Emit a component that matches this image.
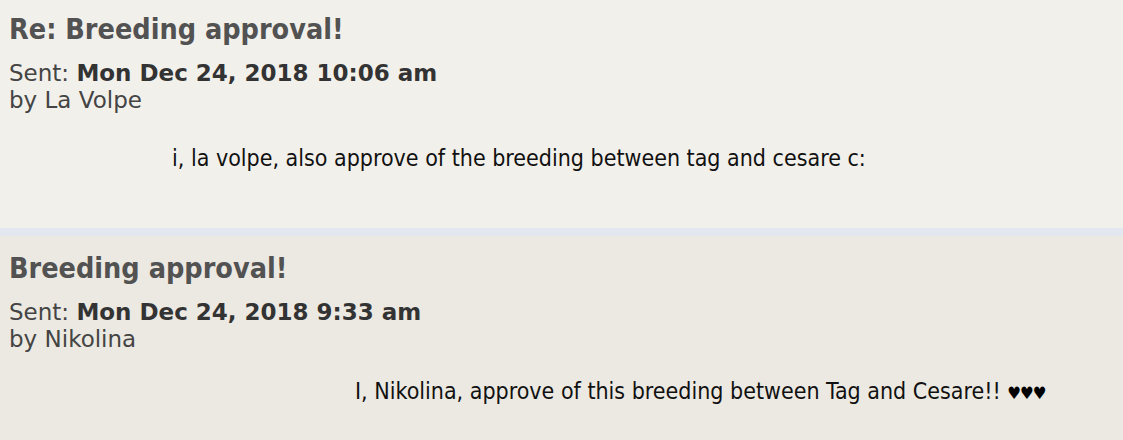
import React from 'react';

const posts = [
  {
    title: 'Re: Breeding approval!',
    sent: 'Mon Dec 24, 2018 10:06 am',
    by: 'La Volpe',
    body: 'i, la volpe, also approve of the breeding between tag and cesare c:',
    hearts: '',
    bg: 'bg-[#f2f0eb]',
    box: 'pt-[12px] h-[228px]',
    bodyCls: 'pl-[163px] mt-[30px]',
  },
  {
    title: 'Breeding approval!',
    sent: 'Mon Dec 24, 2018 9:33 am',
    by: 'Nikolina',
    body: 'I, Nikolina, approve of this breeding between Tag and Cesare!! ',
    hearts: '♥♥♥',
    bg: 'bg-[#ece9e2]',
    box: 'pt-[15px] h-[204px]',
    bodyCls: 'pl-[346px] mt-[24px]',
  },
];

function Post({ post }) {
  return (
    <div className={`${post.bg} ${post.box} px-[9px] font-['DejaVu_Sans',sans-serif]`}>
      <h2 className="text-[28.5px] leading-[36px] font-bold text-[#525252] font-['DejaVu_Sans_Condensed','DejaVu_Sans',sans-serif] font-stretch-condensed">
        {post.title}
      </h2>
      <div className="mt-[12px] text-[23px] leading-[27px] text-[#444444]">
        Sent: <b className="text-[#333333]">{post.sent}</b>
      </div>
      <div className="text-[23px] leading-[27px] text-[#444444]">by {post.by}</div>
      <p className={`${post.bodyCls} text-[23px] leading-[28px] text-[#111111] font-['DejaVu_Sans_Condensed','DejaVu_Sans',sans-serif] font-stretch-condensed`}>
        {post.body}
        {post.hearts && <span className="text-[17px] tracking-[-1px] text-black">{post.hearts}</span>}
      </p>
    </div>
  );
}

export default function App() {
  return (
    <div className="w-[1123px] h-[440px] overflow-hidden">
      <Post post={posts[0]} />
      <div className="h-[8px] bg-[#e3e7ef]" />
      <Post post={posts[1]} />
    </div>
  );
}
